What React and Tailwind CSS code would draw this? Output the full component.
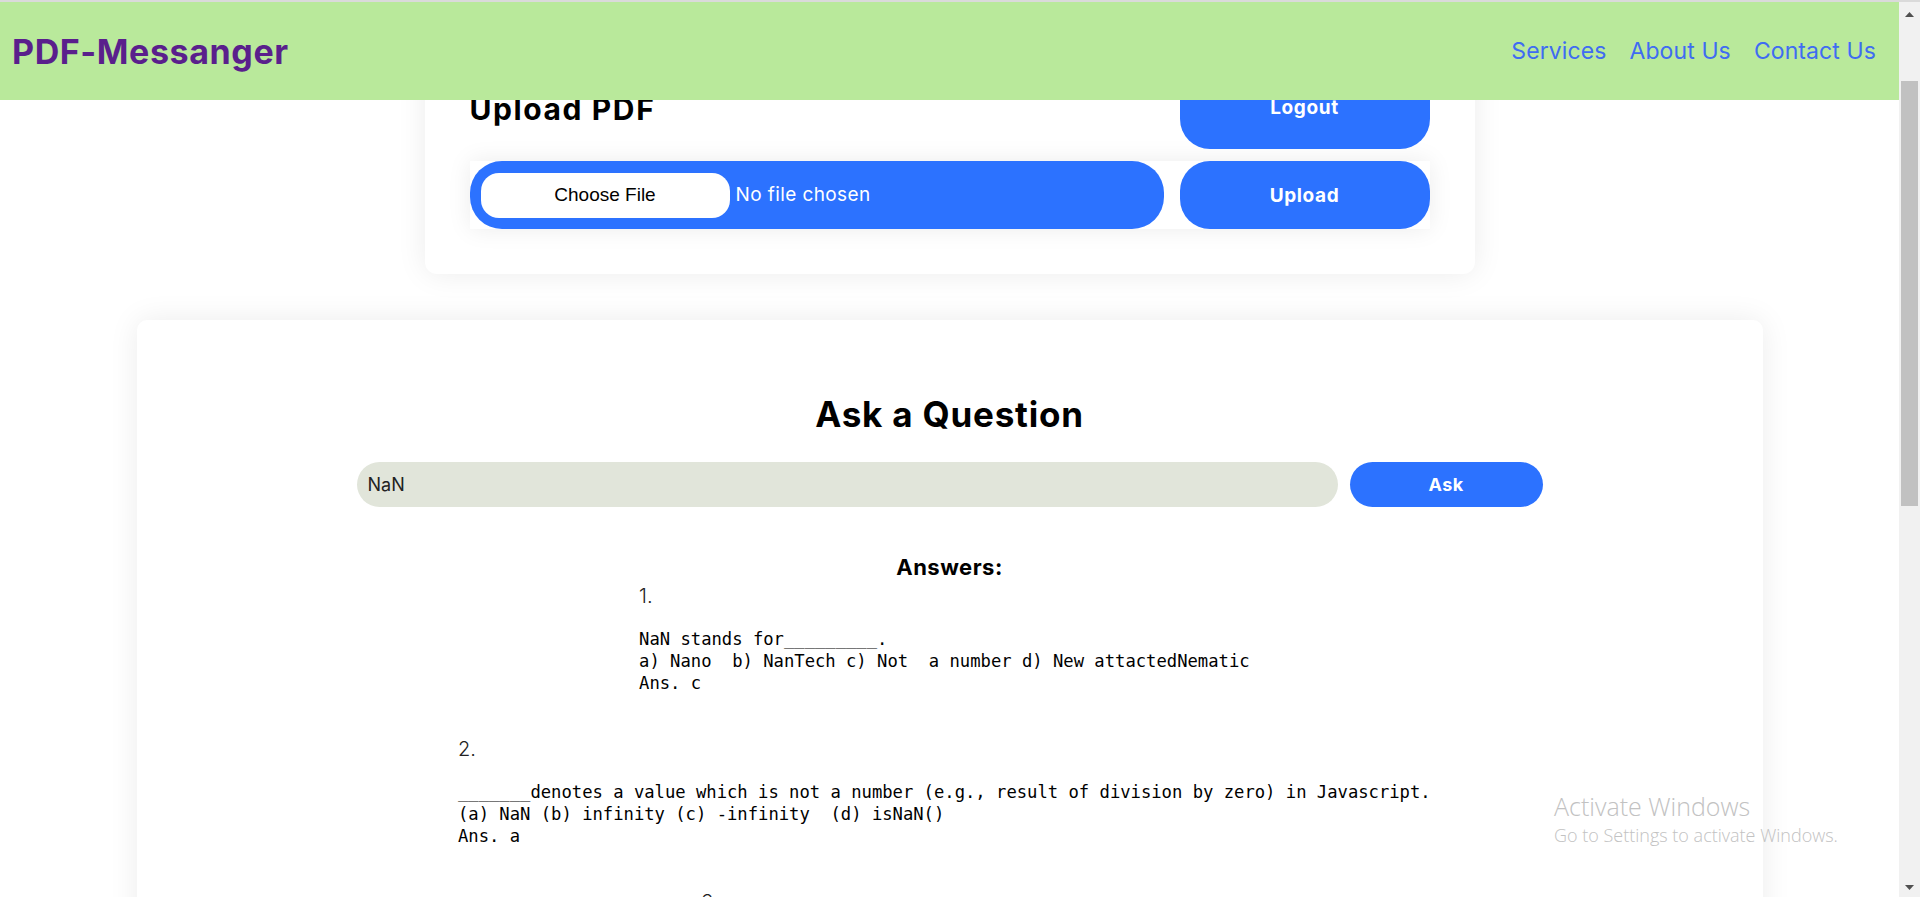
import { useState } from 'react'

const answers = [
  {
    num: '1.',
    text: 'NaN stands for_________.\na) Nano  b) NanTech c) Not  a number d) New attactedNematic \nAns. c',
  },
  {
    num: '2.',
    text: '_______denotes a value which is not a number (e.g., result of division by zero) in Javascript. \n(a) NaN (b) infinity (c) -infinity  (d) isNaN()\nAns. a',
  },
  {
    num: '3.',
    text: 'Which of the following is not a valid NaN test? \n(a) isNaN(x) (b) x !== x\nAns. b',
  },
]

function Header() {
  return (
    <header className="z-10 flex h-[98px] shrink-0 items-center justify-between bg-[#b9e99b] pl-3 pr-[23px]">
      <div className="font-['Inter',sans-serif] text-[34px] font-bold tracking-[0.6px] text-[#5a1f8c]">PDF-Messanger</div>
      <nav className="flex gap-[23px] font-['Inter',sans-serif] text-[23px] font-normal tracking-[0.1px] text-[#3f6cf2]">
        <a href="#">Services</a>
        <a href="#">About Us</a>
        <a href="#">Contact Us</a>
      </nav>
    </header>
  )
}

function UploadCard() {
  return (
    <div className="mx-auto w-[1050px] rounded-xl bg-white px-[45px] pb-[45px] pt-[45px] shadow-[0_0_30px_rgba(0,0,0,0.08)]">
      <div className="flex h-[80px] items-center justify-between">
        <h2 className="font-['Inter',sans-serif] text-[30px] font-bold tracking-[1.6px] text-black">Upload PDF</h2>
        <button className="h-[80px] w-[250px] rounded-[30px] bg-[#2c72ff] pb-[1px] font-['Inter',sans-serif] text-[19px] font-bold tracking-[0.6px] text-white">
          Logout
        </button>
      </div>
      <div className="mt-3 flex h-[68px] gap-4 bg-white shadow-[0_0_25px_rgba(0,0,0,0.08)]">
        <div className="flex flex-1 items-center rounded-[32px] bg-[#2c72ff] pl-[11px]">
          <span className="flex h-[45px] w-[249px] items-center justify-center rounded-[18px] bg-white font-['Liberation_Sans',Arial,sans-serif] text-[19px] text-black">
            Choose File
          </span>
          <span className="ml-[6px] font-['Inter',sans-serif] text-[19px] tracking-[0.4px] text-white">No file chosen</span>
        </div>
        <button className="h-[68px] w-[250px] rounded-[30px] bg-[#2c72ff] pt-[2px] font-['Inter',sans-serif] text-[19px] font-bold tracking-[0.6px] text-white">
          Upload
        </button>
      </div>
    </div>
  )
}

function AskCard() {
  const [question, setQuestion] = useState('NaN')

  return (
    <div className="mx-auto mt-[46px] w-[1626px] rounded-[10px] bg-white pb-10 pt-[74px] shadow-[0_0_30px_rgba(0,0,0,0.08)]">
      <h2 className="text-center font-['Inter',sans-serif] text-[35px] font-bold leading-[40px] tracking-[0.8px] text-black">Ask a Question</h2>
      <div className="mt-[28px] flex justify-center gap-3">
        <input
          value={question}
          onChange={(e) => setQuestion(e.target.value)}
          className="h-[45px] w-[981px] rounded-full bg-[#e1e5da] px-[11px] font-['Inter',sans-serif] text-[18px] text-[#222] outline-none"
        />
        <button className="h-[45px] w-[193px] rounded-full bg-[#2c72ff] font-['Inter',sans-serif] text-[18px] font-bold tracking-[0.4px] text-white">
          Ask
        </button>
      </div>

      <h3 className="mt-[47px] text-center font-['Inter',sans-serif] text-[22px] font-bold leading-[26px] tracking-[0.5px] text-black">Answers:</h3>
      <div className="mt-1 flex flex-col items-center">
        {answers.map((a) => (
          <div key={a.num} className="mb-[43px] text-left">
            <div className="font-['Inter',sans-serif] text-[20px] font-light leading-[24px] text-[#222]">{a.num}</div>
            <pre className="mt-5 font-['DejaVu_Sans_Mono',monospace] text-[17.2px] leading-[22px] text-black">{a.text}</pre>
          </div>
        ))}
      </div>
    </div>
  )
}

function Scrollbar() {
  return (
    <div className="flex w-[21px] shrink-0 flex-col items-center bg-[#f1f1f1]">
      <svg className="mt-[10px]" width="9" height="5" viewBox="0 0 9 5">
        <path d="M0 5 L4.5 0 L9 5 Z" fill="#505050" />
      </svg>
      <div className="mt-[64px] h-[425px] w-[17px] bg-[#c1c1c1]" />
      <div className="flex-1" />
      <svg className="mb-[7px]" width="9" height="5" viewBox="0 0 9 5">
        <path d="M0 0 L4.5 5 L9 0 Z" fill="#505050" />
      </svg>
    </div>
  )
}

export default function App() {
  return (
    <div className="flex h-[897px] w-[1920px] flex-col overflow-hidden bg-white">
      <div className="h-[2px] shrink-0 bg-[#dadada]" />
      <div className="flex min-h-0 flex-1">
        <div className="relative flex min-w-0 flex-1 flex-col">
          <Header />
          <main className="min-h-0 flex-1 overflow-hidden">
            <div className="-mt-[76px]">
              <UploadCard />
              <AskCard />
            </div>
          </main>
          {/* OS watermark sitting over the page */}
          <div className="pointer-events-none absolute left-[1554px] top-[788px] font-['Open_Sans',sans-serif] text-[#c2c2c2]">
            <div className="text-[25px] font-light leading-[32px]">Activate Windows</div>
            <div className="text-[18px] font-light leading-[26px]">Go to Settings to activate Windows.</div>
          </div>
        </div>
        <Scrollbar />
      </div>
    </div>
  )
}
